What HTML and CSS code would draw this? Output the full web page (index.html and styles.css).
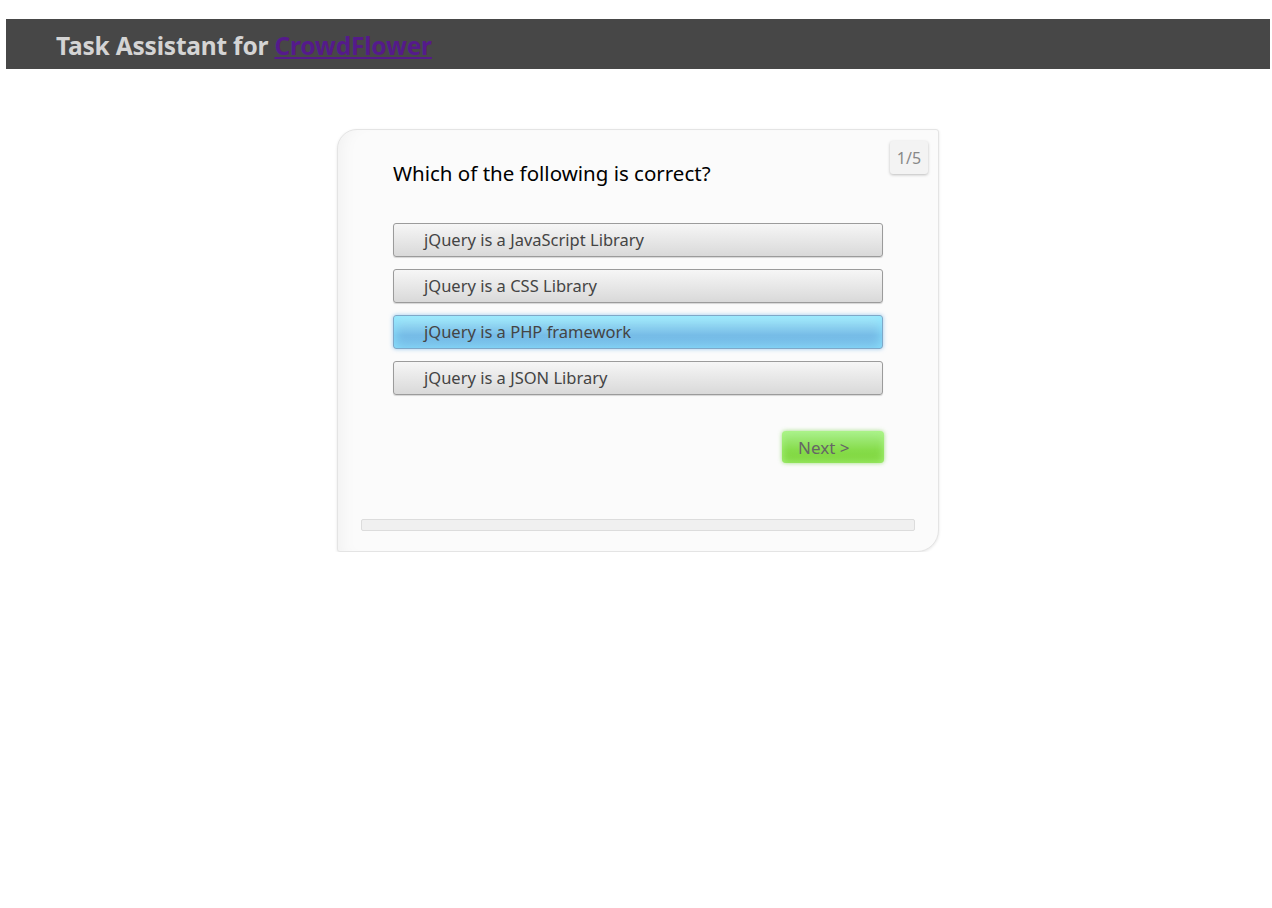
FILE: index.html
```html
<!DOCTYPE html>
<html>
<head>
<meta charset="utf-8">
<title>Task Assistant for CrowdFlower</title>
<link rel="stylesheet" href="styles.css">
</head>
<body>
<header class="topbar">
  <h1 class="title">Task Assistant for <a class="title-link" href="#">CrowdFlower</a></h1>
</header>
<main class="stage">
  <section class="quiz">
    <div class="counter">1/5</div>
    <h2 class="question">Which of the following is correct?</h2>
    <ul class="options">
      <li class="option">jQuery is a JavaScript Library</li>
      <li class="option">jQuery is a CSS Library</li>
      <li class="option option-selected">jQuery is a PHP framework</li>
      <li class="option">jQuery is a JSON Library</li>
    </ul>
    <div class="actions">
      <button class="next">Next &gt;</button>
    </div>
    <div class="progress"></div>
  </section>
</main>
</body>
</html>
```

FILE: styles.css
```css
html, body {
  margin: 0;
  padding: 0;
  background: #ffffff;
}
body {
  font-family: "Noto Sans", "Open Sans", sans-serif;
  padding: 19px 2px 0 6px;
}
.topbar {
  background: #474747;
  height: 50px;
  display: flex;
  align-items: center;
  padding-left: 50px;
}
.title {
  margin: 0;
  font-size: 24.5px;
  font-weight: 700;
  color: #d4d4d4;
  letter-spacing: -0.2px;
  line-height: 50px;
  position: relative;
  top: 2px;
}
.title-link {
  color: #551a8b;
  text-decoration: underline;
}
.stage {
  display: flex;
  justify-content: center;
  padding-top: 60px;
}
.quiz {
  position: relative;
  box-sizing: border-box;
  width: 602px;
  height: 423px;
  background: #fbfbfb;
  border: 1px solid #e4e4e4;
  border-radius: 20px 3px 22px 3px;
  box-shadow: inset 14px 0 18px -12px rgba(0,0,0,0.05), 0 1px 3px rgba(0,0,0,0.1);
  padding: 28px 55px 0 55px;
  display: flex;
  flex-direction: column;
}
.counter {
  position: absolute;
  top: 11px;
  right: 10px;
  width: 38px;
  height: 33px;
  box-sizing: border-box;
  background: #f3f3f3;
  border-radius: 3px;
  box-shadow: 0 1px 3px rgba(0,0,0,0.25);
  color: #888;
  font-size: 16px;
  display: flex;
  align-items: center;
  justify-content: center;
}
.question {
  margin: 0;
  font-size: 20.5px;
  font-weight: 400;
  color: #000;
  line-height: 30px;
}
.options {
  list-style: none;
  margin: 35px 0 0 0;
  padding: 0;
  display: flex;
  flex-direction: column;
  gap: 12px;
}
.option {
  box-sizing: border-box;
  height: 34px;
  padding-left: 30px;
  padding-bottom: 2px;
  display: flex;
  align-items: center;
  font-size: 16.5px;
  color: #444;
  border: 1px solid #9b9b9b;
  border-radius: 3px;
  background: linear-gradient(#f6f6f6, #d9d9d9);
  box-shadow: 0 1px 1px rgba(0,0,0,0.15);
}
.option-selected {
  background: linear-gradient(#a9ecfb, #76bce7 60%, #78bde8);
  border-color: #7fa8c8;
  box-shadow: inset 0 0 12px rgba(140,230,255,0.95), 0 0 4px rgba(90,170,230,0.6);
}
.actions {
  display: flex;
  justify-content: flex-end;
  margin-top: 36px;
  margin-right: -1px;
}
.next {
  width: 102px;
  height: 32px;
  border: none;
  border-radius: 4px;
  background: linear-gradient(#aaf08e, #86dc4a 60%, #7fd53c);
  box-shadow: inset 0 0 8px rgba(170,245,130,0.95), 0 0 4px rgba(120,210,70,0.7);
  color: #666;
  font-family: "Noto Sans", "Open Sans", sans-serif;
  font-size: 17px;
  text-align: left;
  padding-left: 16px;
}
.progress {
  margin: 56px -32px 0 -32px;
  height: 12px;
  box-sizing: border-box;
  background: #f0f0f0;
  border: 1px solid #dcdcdc;
  border-radius: 2px;
}
```
